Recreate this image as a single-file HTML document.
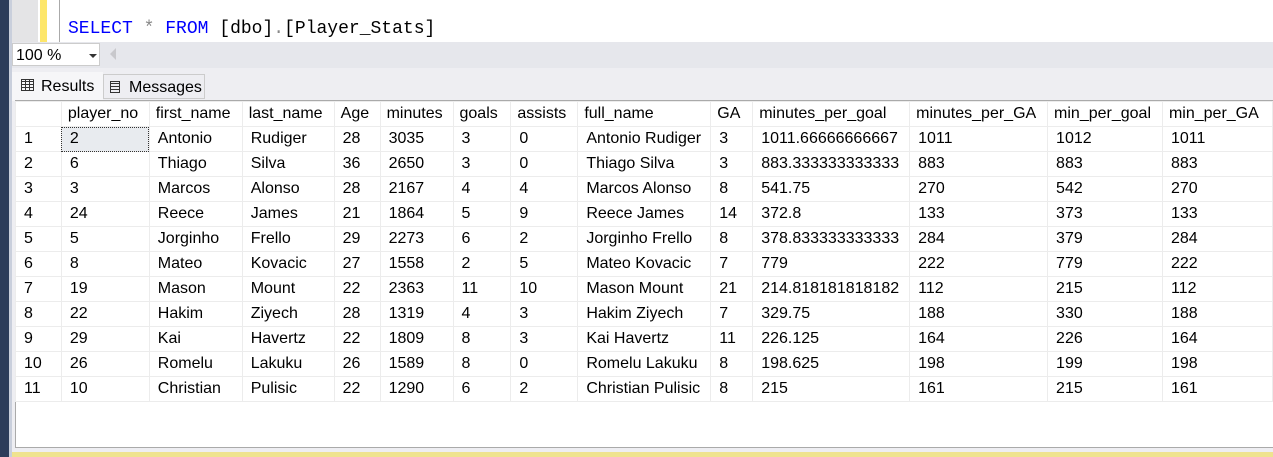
<!DOCTYPE html><html><head><style>
body{margin:0;width:1273px;height:457px;overflow:hidden;background:#fff;font-family:"Liberation Sans",sans-serif;position:relative}
.a{position:absolute}
table{border-collapse:collapse;table-layout:fixed;font-size:16px}
td{height:24px;border:1px solid #ececec;padding:0 0 0 8px;white-space:nowrap;overflow:hidden;color:#000}
tr:first-child td{padding-left:6px}
</style></head><body>
<div class="a" style="left:0;top:0;width:9px;height:457px;background:#2c3c5a"></div>
<div class="a" style="left:9px;top:0;width:3px;height:457px;background:#c9cfdc"></div>
<div class="a" style="left:12px;top:0;width:26px;height:42px;background:#e4e4e6"></div>
<div class="a" style="left:40px;top:0;width:7px;height:42px;background:#fde66a"></div>
<div class="a" style="left:59px;top:0;width:1px;height:42px;background:#aaa"></div>
<div class="a" style="left:68px;top:19px;font-family:'Liberation Mono',monospace;font-size:18px;color:#000"><span style="color:#0000ff">SELECT</span> <span style="color:#888">*</span> <span style="color:#0000ff">FROM</span> [dbo]<span style="color:#888">.</span>[Player_Stats]</div>
<div class="a" style="left:12px;top:42px;width:1261px;height:26px;background:#e6e7ec"></div>
<div class="a" style="left:12px;top:43px;width:88px;height:23px;background:#fff;border:1px solid #ccc;box-sizing:border-box;font-size:16px;padding:3px 0 0 3px">100 %<span style="position:absolute;left:76px;top:10px;border:4px solid transparent;border-top-color:#333;border-bottom:0"></span></div>
<div class="a" style="left:110px;top:48px;border:6px solid transparent;border-right-color:#c8c8cc;border-left:0;height:0"></div>
<div class="a" style="left:12px;top:68px;width:1261px;height:384px;background:#eeeef2"></div>
<div class="a" style="left:12px;top:72px;width:91px;height:29px;background:#f6f6f8;font-size:16px"><span style="position:absolute;left:9px;top:7px;width:11px;height:10px;border:1px solid #333;background:repeating-linear-gradient(90deg,transparent 0 3px,#333 3px 4px),repeating-linear-gradient(0deg,transparent 0 2px,#333 2px 3px)"></span><span style="position:absolute;left:29px;top:6px">Results</span></div>
<div class="a" style="left:103px;top:74px;width:102px;height:25px;background:#eeeef2;border:1px solid #ccc;box-sizing:border-box;font-size:16px"><span style="position:absolute;left:6px;top:6px;width:8px;height:10px;border:1px solid #333;background:repeating-linear-gradient(0deg,transparent 0 2px,#333 2px 3px)"></span><span style="position:absolute;left:25px;top:4px">Messages</span></div>
<div class="a" style="left:15px;top:100px;width:1258px;height:348px;background:#fff;border:1px solid #aaa;border-right:0;box-sizing:border-box"></div>
<table class="a" style="left:15px;top:101px">
<colgroup><col style="width:46px"><col style="width:88px"><col style="width:93px"><col style="width:92px"><col style="width:46px"><col style="width:73px"><col style="width:58px"><col style="width:67px"><col style="width:133px"><col style="width:42px"><col style="width:157px"><col style="width:138px"><col style="width:115px"><col style="width:110px"></colgroup>
<tr><td></td><td>player_no</td><td>first_name</td><td>last_name</td><td>Age</td><td>minutes</td><td>goals</td><td>assists</td><td>full_name</td><td>GA</td><td>minutes_per_goal</td><td>minutes_per_GA</td><td>min_per_goal</td><td>min_per_GA</td></tr>
<tr><td>1</td><td style="background:#e8ebef;outline:1px dotted #333;outline-offset:-1px">2</td><td>Antonio</td><td>Rudiger</td><td>28</td><td>3035</td><td>3</td><td>0</td><td>Antonio Rudiger</td><td>3</td><td>1011.66666666667</td><td>1011</td><td>1012</td><td>1011</td></tr>
<tr><td>2</td><td>6</td><td>Thiago</td><td>Silva</td><td>36</td><td>2650</td><td>3</td><td>0</td><td>Thiago Silva</td><td>3</td><td>883.333333333333</td><td>883</td><td>883</td><td>883</td></tr>
<tr><td>3</td><td>3</td><td>Marcos</td><td>Alonso</td><td>28</td><td>2167</td><td>4</td><td>4</td><td>Marcos Alonso</td><td>8</td><td>541.75</td><td>270</td><td>542</td><td>270</td></tr>
<tr><td>4</td><td>24</td><td>Reece</td><td>James</td><td>21</td><td>1864</td><td>5</td><td>9</td><td>Reece James</td><td>14</td><td>372.8</td><td>133</td><td>373</td><td>133</td></tr>
<tr><td>5</td><td>5</td><td>Jorginho</td><td>Frello</td><td>29</td><td>2273</td><td>6</td><td>2</td><td>Jorginho Frello</td><td>8</td><td>378.833333333333</td><td>284</td><td>379</td><td>284</td></tr>
<tr><td>6</td><td>8</td><td>Mateo</td><td>Kovacic</td><td>27</td><td>1558</td><td>2</td><td>5</td><td>Mateo Kovacic</td><td>7</td><td>779</td><td>222</td><td>779</td><td>222</td></tr>
<tr><td>7</td><td>19</td><td>Mason</td><td>Mount</td><td>22</td><td>2363</td><td>11</td><td>10</td><td>Mason Mount</td><td>21</td><td>214.818181818182</td><td>112</td><td>215</td><td>112</td></tr>
<tr><td>8</td><td>22</td><td>Hakim</td><td>Ziyech</td><td>28</td><td>1319</td><td>4</td><td>3</td><td>Hakim Ziyech</td><td>7</td><td>329.75</td><td>188</td><td>330</td><td>188</td></tr>
<tr><td>9</td><td>29</td><td>Kai</td><td>Havertz</td><td>22</td><td>1809</td><td>8</td><td>3</td><td>Kai Havertz</td><td>11</td><td>226.125</td><td>164</td><td>226</td><td>164</td></tr>
<tr><td>10</td><td>26</td><td>Romelu</td><td>Lakuku</td><td>26</td><td>1589</td><td>8</td><td>0</td><td>Romelu Lakuku</td><td>8</td><td>198.625</td><td>198</td><td>199</td><td>198</td></tr>
<tr><td>11</td><td>10</td><td>Christian</td><td>Pulisic</td><td>22</td><td>1290</td><td>6</td><td>2</td><td>Christian Pulisic</td><td>8</td><td>215</td><td>161</td><td>215</td><td>161</td></tr>
</table>
<div class="a" style="left:12px;top:452px;width:1261px;height:5px;background:#efe38f"></div>
</body></html>
